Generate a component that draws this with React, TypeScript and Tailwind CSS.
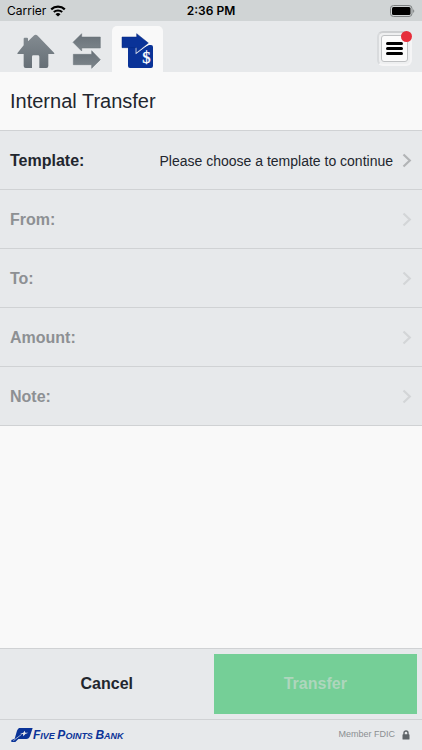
import { useState } from "react";

const fields = [
	{ label: "Template:", value: "Please choose a template to continue", enabled: true },
	{ label: "From:", value: "", enabled: false },
	{ label: "To:", value: "", enabled: false },
	{ label: "Amount:", value: "", enabled: false },
	{ label: "Note:", value: "", enabled: false },
];

function WifiIcon() {
	return (
		<svg width="16" height="12" viewBox="0 0 16 12" aria-hidden="true">
			<path d="M1.2 4.4a9.8 9.8 0 0 1 13.6 0" fill="none" stroke="#000" strokeWidth="2.2" />
			<path d="M3.8 7.1a6.1 6.1 0 0 1 8.4 0" fill="none" stroke="#000" strokeWidth="2" />
			<path d="M8 11.6 5.5 9.2a3.7 3.7 0 0 1 5 0z" />
		</svg>
	);
}

function BatteryIcon() {
	return (
		<svg width="25" height="12" viewBox="0 0 25 12" aria-hidden="true">
			<rect x="0.5" y="0.5" width="21.5" height="11" rx="3" fill="none" stroke="#7c8081" />
			<rect x="2" y="2" width="18.5" height="8" rx="1.5" />
			<path d="M23.2 4.2c1.4.5 1.4 3.1 0 3.6z" fill="#7c8081" />
		</svg>
	);
}

function HomeIcon() {
	return (
		<svg width="38" height="34" viewBox="51 102 114 102" aria-hidden="true">
			<defs>
				<linearGradient id="home-fill" x1="0" y1="0" x2="0" y2="1">
					<stop offset="0" stopColor="#838b91" />
					<stop offset="1" stopColor="#666f76" />
				</linearGradient>
			</defs>
			<path
				fill="url(#home-fill)"
				d="M71 136V116q0-3 3-3h7q3 0 3 3v8l17-17q6-5 12 0l49 51q3 4-2 4h-15v36q0 6-6 6h-21v-34q0-4-4-4h-14q-4 0-4 4v34H77q-6 0-6-6v-36H54q-4 0-1-4z"
			/>
		</svg>
	);
}

function ArrowsIcon() {
	return (
		<svg width="29" height="36" viewBox="216 99 87 108" aria-hidden="true">
			<defs>
				<linearGradient id="arrow-fill" x1="0" y1="0" x2="0" y2="1">
					<stop offset="0" stopColor="#687178" />
					<stop offset="1" stopColor="#7d858b" />
				</linearGradient>
			</defs>
			<g fill="url(#arrow-fill)" stroke="#667077" strokeWidth="1.5" strokeLinejoin="round">
				<path d="M219 127l26-26v10h56v33h-56v9z" />
				<path d="M301 179l-26-27v11h-55v31h55v11z" />
			</g>
		</svg>
	);
}

function TransferIcon() {
	return (
		<svg width="33" height="36" viewBox="364 99 99 108" aria-hidden="true">
			<path fill="#0a3398" d="M385 141h50l13-6h6q6 0 6 6v57q0 6-6 6h-63q-6 0-6-6z" />
			<path fill="none" stroke="#f9f9f9" strokeWidth="6" d="M411 141v16l37-28" />
			<path fill="#0a3398" stroke="#05277f" strokeWidth="1.5" d="M367 111h44v-10l35 28-35 28v-14h-44z" />
			<text
				x="440"
				y="190"
				textAnchor="middle"
				fill="#fff"
				stroke="#fff"
				fontSize="50"
				fontFamily="Liberation Serif, serif"
			>
				$
			</text>
		</svg>
	);
}

function Chevron({ enabled }: { enabled: boolean }) {
	return (
		<svg width="10" height="15" viewBox="0 0 10 15" aria-hidden="true">
			<path d="M1.5 1.5 7.8 7.5 1.5 13.5" fill="none" stroke={enabled ? "#b2b4b6" : "#d3d5d7"} strokeWidth="2.2" />
		</svg>
	);
}

function BankMark() {
	return (
		<svg width="22" height="16" viewBox="0 0 66 48" aria-hidden="true">
			<path fill="#0a3398" d="M24 3h41l-8 24q-3 9-11 9H22l-9 9H1v-6l10-4 7-24q2-5 6-8z" />
			<path fill="#e7e9eb" d="m41 11 2 6h9l-9 4-6 7-1-7-9-1 10-3z" />
			<path stroke="#e7e9eb" strokeWidth="2" d="M7 41 32 22" />
		</svg>
	);
}

function LockIcon() {
	return (
		<svg width="8" height="10" viewBox="0 0 8 10" aria-hidden="true">
			<path d="M2 5V3a2 2 0 0 1 4 0v2" fill="none" stroke="#5f6468" strokeWidth="1.4" />
			<rect x="0.5" y="4.3" width="7" height="5.2" rx="0.6" fill="#5f6468" />
		</svg>
	);
}

export default function App() {
	const [tab, setTab] = useState("internal");

	return (
		<div className="flex min-h-screen flex-col bg-[#f9f9f9] font-['Liberation_Sans',Arial,sans-serif] text-[#22262e]">
			<div className="grid h-[21px] grid-cols-3 items-center bg-[#d0d4d5] px-[7px] font-['Inter',sans-serif] text-[12px] text-black">
				<div className="flex items-center gap-1">
					<span>Carrier</span>
					<WifiIcon />
				</div>
				<span className="text-center font-semibold">2:36 PM</span>
				<div className="flex justify-end">
					<BatteryIcon />
				</div>
			</div>

			<header className="flex h-[51px] items-end bg-[#e7e9eb] pr-[10px] pl-[17px]">
				<nav className="flex flex-1 items-end">
					<button aria-label="Home" onClick={() => setTab("home")} className="pb-1">
						<HomeIcon />
					</button>
					<button aria-label="Transfers" onClick={() => setTab("transfers")} className="ml-[17px] pb-[3px]">
						<ArrowsIcon />
					</button>
					<button
						aria-label="Internal transfer"
						aria-pressed={tab === "internal"}
						onClick={() => setTab("internal")}
						className="ml-[11px] flex h-[46px] w-[51px] items-end justify-center rounded-t-[5px] bg-[#f9f9f9] pb-[3px]"
					>
						<TransferIcon />
					</button>
				</nav>
				<button
					aria-label="Menu"
					className="relative mb-[6px] flex h-[35px] w-[35px] items-center justify-center rounded-[6px] border-2 border-t-[#cdcfd1] border-r-[#f5f5f6] border-b-[#f5f5f6] border-l-[#d9dbdd] bg-[#eeeff0]"
				>
					<span className="flex h-[27px] w-[27px] flex-col items-center justify-center gap-[2px] rounded-[3px] border border-[#bfc1c3] bg-[#fbfbfb]">
						<span className="h-[3px] w-[17px] rounded-full bg-black" />
						<span className="h-[3px] w-[17px] rounded-full bg-black" />
						<span className="h-[3px] w-[17px] rounded-full bg-black" />
					</span>
					<span className="absolute -top-[2px] -right-[2px] h-[11px] w-[11px] rounded-full bg-[#e62e3b]" />
				</button>
			</header>

			<main className="flex flex-1 flex-col">
				<h1 className="flex h-[59px] items-center border-b border-[#d0d2d4] px-[10px] text-[20px]">Internal Transfer</h1>
				{fields.map((field) => (
					<button
						key={field.label}
						disabled={!field.enabled}
						className="flex h-[59px] items-center border-b border-[#d0d2d4] bg-[#e7e9eb] px-[10px] disabled:text-[#8d9093]"
					>
						<span className="pt-[2px] text-[16px] font-bold">{field.label}</span>
						<span className="mr-[9px] ml-auto pt-[2px] text-[14px]">{field.value}</span>
						<Chevron enabled={field.enabled} />
					</button>
				))}
			</main>

			<div className="flex h-[71px] border-t border-[#d0d2d4] bg-[#e7e9eb] py-[5px] pr-[5px]">
				<button className="flex-21 text-[16px] font-bold">Cancel</button>
				<button disabled className="flex-20 bg-[#75cf97] text-[16px] font-bold text-[#aed6bd]">
					Transfer
				</button>
			</div>

			<footer className="flex h-[31px] items-center border-t border-[#d0d2d4] bg-[#e7e9eb] pr-[12px] pl-[11px]">
				<BankMark />
				<span className="text-[9px] font-bold whitespace-nowrap text-[#0a3398] italic">
					<span className="text-[12px]">F</span>IVE <span className="text-[12px]">P</span>OINTS{" "}
					<span className="text-[12px]">B</span>ANK
				</span>
				<span className="mr-[7px] ml-auto text-[9px] text-[#8b8f92]">Member FDIC</span>
				<LockIcon />
			</footer>
		</div>
	);
}
